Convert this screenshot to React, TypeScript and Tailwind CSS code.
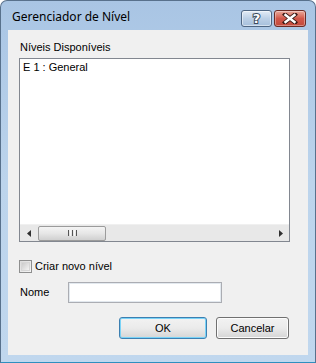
import React from "react";

export default function App() {
  return (
    <div className="w-[316px] h-[363px] overflow-hidden">
      <div
        className="relative w-[316px] h-[363px] rounded-t-[7px] border border-[#58718c] border-b-[#2f8fbf] bg-gradient-to-b from-[#a9c5e4] via-[#bcd4ec] to-[#c0d7ee] flex flex-col"
        style={{ fontFamily: '"Liberation Sans", Arial, sans-serif' }}
      >
        {/* Title bar */}
        <div className="h-[29px] flex items-start pl-[11px] pr-[9px]">
          <div
            className="mt-[9px] text-[12px] leading-[14px] text-[#000000] flex-1"
            style={{ fontFamily: '"Noto Sans", "Open Sans", sans-serif' }}
          >
            Gerenciador de Nível
          </div>
          <div className="mt-[9px] flex gap-[2px]">
            <div className="w-[31px] h-[17px] rounded-[3px] border border-[#4e6683] bg-gradient-to-b from-[#e3ecf6] via-[#bcd0e6] to-[#a6bfdc] flex items-center justify-center shadow-[inset_0_0_0_1px_rgba(255,255,255,0.5)]">
              <span
                className="text-[13px] leading-[13px] font-bold text-white [-webkit-text-stroke:2px_#3b4a5c] [paint-order:stroke_fill]"
                style={{ fontFamily: '"DejaVu Sans", sans-serif' }}
              >
                ?
              </span>
            </div>
            <div className="w-[32px] h-[17px] rounded-[3px] border border-[#6b2b25] bg-gradient-to-b from-[#e9a99c] via-[#d2574a] to-[#c24a3b] flex items-center justify-center shadow-[inset_0_0_0_1px_rgba(255,255,255,0.35)]">
              <svg width="16" height="11" viewBox="0 0 16 11">
                <path d="M3 1.5 L13 9.5 M13 1.5 L3 9.5" stroke="#3a1a16" strokeWidth="4.2" strokeLinecap="square" />
                <path d="M3.5 2 L12.5 9 M12.5 2 L3.5 9" stroke="#ffffff" strokeWidth="2.4" strokeLinecap="square" />
              </svg>
            </div>
          </div>
        </div>

        {/* Client area */}
        <div className="ml-[7px] w-[300px] h-[325px] bg-[#f0f0f0] flex flex-col pl-[11px] text-[11px] leading-[13px] text-black">
          <div className="mt-[11px] ml-[1px] h-[13px]">Níveis Disponíveis</div>
          <div className="mt-[4px] w-[271px] h-[184px] border border-[#828790] bg-white flex flex-col">
            <div className="flex-1 pl-[3px] pt-[2px]">E 1 : General</div>
            <div className="h-[17px] bg-[#e8e8e8] flex items-center border-t border-[#f0f0f0]">
              <div className="w-[17px] flex items-center justify-center">
                <svg width="4" height="7" viewBox="0 0 4 7">
                  <path d="M4 0 L0 3.5 L4 7 Z" fill="#303030" />
                </svg>
              </div>
              <div className="ml-[1px] w-[68px] h-[15px] rounded-[2px] border border-[#9b9b9b] bg-gradient-to-b from-[#f4f4f4] via-[#e6e6e6] to-[#d0d0d0] flex items-center justify-center gap-[1px]">
                <div className="w-[1px] h-[6px] bg-[#555]" />
                <div className="w-[1px] h-[6px] bg-[#f8f8f8]" />
                <div className="w-[1px] h-[6px] bg-[#555]" />
                <div className="w-[1px] h-[6px] bg-[#f8f8f8]" />
                <div className="w-[1px] h-[6px] bg-[#555]" />
              </div>
              <div className="flex-1" />
              <div className="w-[17px] flex items-center justify-center">
                <svg width="4" height="7" viewBox="0 0 4 7">
                  <path d="M0 0 L4 3.5 L0 7 Z" fill="#303030" />
                </svg>
              </div>
            </div>
          </div>

          <div className="mt-[18px] flex items-center h-[13px]">
            <div className="w-[13px] h-[13px] border border-[#8e8f8f] bg-gradient-to-br from-[#dcdcdc] to-[#f6f6f6] flex items-center justify-center">
              <div className="w-[9px] h-[9px] border border-[#d6d6d6] bg-gradient-to-br from-[#cbcbcb] to-[#f4f4f4]" />
            </div>
            <span className="ml-[3px]">Criar novo nível</span>
          </div>

          <div className="mt-[9px] flex items-center h-[21px]">
            <span className="ml-[1px] w-[48px]">Nome</span>
            <div className="w-[154px] h-[21px] border border-[#abadb3] border-t-[#abadb3] bg-white shadow-[inset_0_0_0_1px_#e3e9ef]" />
          </div>

          <div className="mt-[14px] flex">
            <div className="ml-[100px] w-[88px] h-[22px] rounded-[3px] border border-[#3c7fb1] bg-gradient-to-b from-[#f2f2f2] via-[#ebebeb] to-[#d5d5d5] shadow-[inset_0_0_0_1px_#7ad3f7] flex items-center justify-center">
              OK
            </div>
            <div className="ml-[9px] w-[73px] h-[22px] rounded-[3px] border border-[#707070] bg-gradient-to-b from-[#f2f2f2] via-[#ebebeb] to-[#d5d5d5] shadow-[inset_0_0_0_1px_#fcfcfc] flex items-center justify-center">
              Cancelar
            </div>
          </div>
        </div>
      </div>
    </div>
  );
}
